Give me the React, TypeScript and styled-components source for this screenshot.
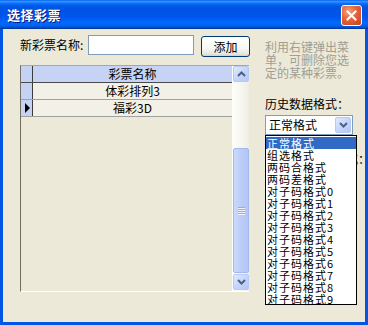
import React from "react";
import styled, { createGlobalStyle } from "styled-components";

const Global = createGlobalStyle`
  html, body { margin: 0; padding: 0; background: #ffffff; }
  body { font-family: "Noto Sans CJK SC", "Noto Sans", sans-serif; font-size: 12px; color: #000; }
  * { box-sizing: border-box; }
`;

const Window = styled.div`
  width: 368px;
  height: 325px;
  display: flex;
  flex-direction: column;
  background: #0055e5;
  overflow: hidden;
`;

const TitleBar = styled.div`
  height: 29px;
  flex: none;
  display: flex;
  align-items: center;
  justify-content: space-between;
  padding: 0 6px 0 7px;
  background: linear-gradient(
    180deg,
    #0058ee 0%,
    #3593ff 4%,
    #288eff 7%,
    #127dff 10%,
    #036ffc 13%,
    #0262ee 17%,
    #0057e5 22%,
    #0054e3 28%,
    #0055eb 56%,
    #005bf5 66%,
    #026afe 78%,
    #0062ef 88%,
    #0052d6 94%,
    #0040ab 97%,
    #003092 100%
  );
`;

const Title = styled.span`
  color: #ffffff;
  font-weight: bold;
  font-size: 13px;
  line-height: 16px;
  letter-spacing: 0.5px;
  text-shadow: 1px 1px 0 #0a1883;
  margin-top: 1px;
`;

const CloseButton = styled.div`
  width: 21px;
  height: 21px;
  border: 1px solid #ffffff;
  border-radius: 3px;
  background: radial-gradient(circle at 35% 30%, #f0a184 0%, #e2643c 45%, #c7401b 100%);
  display: flex;
  align-items: center;
  justify-content: center;
  margin-top: 2px;
`;

const Body = styled.div`
  flex: 1;
  margin: 0 3px 3px 3px;
  background: #ece9d8;
  display: flex;
  padding: 6px 0 0 17px;
`;

const LeftCol = styled.div`
  width: 230px;
  display: flex;
  flex-direction: column;
`;

const TopRow = styled.div`
  display: flex;
  align-items: flex-start;
  height: 22px;
`;

const FieldLabel = styled.span`
  width: 68px;
  line-height: 20px;
  white-space: nowrap;
`;

const TextInput = styled.div`
  width: 106px;
  height: 20px;
  border: 1px solid #7f9db9;
  background: #ffffff;
`;

const Button = styled.div`
  width: 49px;
  height: 21px;
  margin: 1px 0 0 7px;
  border: 1px solid #003c74;
  border-radius: 3px;
  background: linear-gradient(180deg, #ffffff 0%, #f7f7f4 60%, #e6e4da 90%, #d6d0c5 100%);
  display: flex;
  align-items: center;
  justify-content: center;
  line-height: 14px;
`;

const Grid = styled.div`
  margin-top: 8px;
  width: 229px;
  height: 227px;
  display: flex;
  border-top: 1px solid #aca899;
  border-left: 1px solid #716f64;
  border-bottom: 1px solid #ffffff;
  background: #ece9d8;
`;

const GridBody = styled.div`
  flex: 1;
  display: flex;
  flex-direction: column;
`;

const GridRow = styled.div<{ $header?: boolean }>`
  display: flex;
  height: 17px;
  border-bottom: 1px solid ${(p) => (p.$header ? "#4a4a4a" : "#a0a0a0")};
`;

const Indicator = styled.div`
  width: 12px;
  flex: none;
  background: #c4d2f3;
  border-right: 1px solid #3c3c3c;
  display: flex;
  align-items: center;
  justify-content: center;
`;

const Cell = styled.div<{ $header?: boolean }>`
  flex: 1;
  background: ${(p) => (p.$header ? "#c6d3f4" : "#f3f1e7")};
  text-align: center;
  line-height: 16px;
`;

const Scrollbar = styled.div`
  width: 17px;
  flex: none;
  display: flex;
  flex-direction: column;
  padding: 0 0 0 1px;
  background: linear-gradient(90deg, #fefefb 0%, #f6f5ef 60%, #eeede5 100%);
`;

const ScrollBtn = styled.div`
  height: 16px;
  flex: none;
  border: 1px solid #b6c9f5;
  border-radius: 2px;
  background: linear-gradient(135deg, #e2ebfd 0%, #c5d5fb 50%, #b5c8f6 100%);
  display: flex;
  align-items: center;
  justify-content: center;
`;

const Track = styled.div<{ $h: number }>`
  height: ${(p) => p.$h}px;
  flex: none;
`;

const Thumb = styled.div`
  height: 125px;
  flex: none;
  border: 1px solid #a3b9ee;
  border-radius: 2px;
  background: linear-gradient(90deg, #cad9fc 0%, #bccdf9 50%, #b2c5f6 100%);
  display: flex;
  flex-direction: column;
  align-items: center;
  justify-content: center;
  gap: 1px;
`;

const Grip = styled.div`
  width: 7px;
  height: 1px;
  background: #8eaef4;
  box-shadow: 0 1px 0 #eef3fe;
`;

const RightCol = styled.div`
  margin-left: 15px;
  width: 88px;
  display: flex;
  flex-direction: column;
  padding-top: 5px;
`;

const Hint = styled.div`
  color: #a09e94;
  line-height: 13px;
`;

const SectionLabel = styled.div`
  margin-top: 18px;
  line-height: 13px;
  white-space: nowrap;
`;

const ComboWrap = styled.div`
  position: relative;
  margin-top: 5px;
  width: 88px;
`;

const Combo = styled.div`
  height: 20px;
  border: 1px solid #7f9db9;
  background: #ffffff;
  display: flex;
  align-items: center;
  padding: 1px 1px 1px 3px;
`;

const ComboText = styled.span`
  flex: 1;
  line-height: 14px;
`;

const ComboBtn = styled(ScrollBtn)`
  width: 16px;
  height: 16px;
`;

const DropList = styled.div`
  position: absolute;
  top: 20px;
  left: 0;
  width: 92px;
  height: 170px;
  border: 1px solid #000000;
  background: #ffffff;
  padding: 1px 0 0 0;
  z-index: 2;
`;

const DropItem = styled.div<{ $selected?: boolean }>`
  height: 12px;
  line-height: 12px;
  font-size: 11px;
  letter-spacing: 1px;
  padding-left: 1px;
  white-space: nowrap;
  background: ${(p) => (p.$selected ? "#316ac5" : "transparent")};
  color: ${(p) => (p.$selected ? "#ffffff" : "#000000")};
`;

const HiddenLabel = styled.div`
  margin-top: 17px;
  width: 105px;
  text-align: right;
  line-height: 13px;
  white-space: nowrap;
`;

const Chevron = ({ up }: { up?: boolean }) => (
  <svg width="9" height="6" viewBox="0 0 9 6">
    <path
      d={up ? "M1 5 L4.5 1.5 L8 5" : "M1 1 L4.5 4.5 L8 1"}
      fill="none"
      stroke="#4d6185"
      strokeWidth="2"
    />
  </svg>
);

const items = [
  "正常格式",
  "组选格式",
  "两码合格式",
  "两码差格式",
  "对子码格式0",
  "对子码格式1",
  "对子码格式2",
  "对子码格式3",
  "对子码格式4",
  "对子码格式5",
  "对子码格式6",
  "对子码格式7",
  "对子码格式8",
  "对子码格式9",
];

export default function App() {
  return (
    <>
      <Global />
      <Window>
        <TitleBar>
          <Title>选择彩票</Title>
          <CloseButton>
            <svg width="11" height="11" viewBox="0 0 11 11">
              <path d="M1.5 1.5 L9.5 9.5 M9.5 1.5 L1.5 9.5" stroke="#ffffff" strokeWidth="2" strokeLinecap="square" />
            </svg>
          </CloseButton>
        </TitleBar>
        <Body>
          <LeftCol>
            <TopRow>
              <FieldLabel>新彩票名称:</FieldLabel>
              <TextInput />
              <Button>添加</Button>
            </TopRow>
            <Grid>
              <GridBody>
                <GridRow $header>
                  <Indicator />
                  <Cell $header>彩票名称</Cell>
                </GridRow>
                <GridRow>
                  <Indicator />
                  <Cell>体彩排列3</Cell>
                </GridRow>
                <GridRow>
                  <Indicator>
                    <svg width="6" height="10" viewBox="0 0 6 10">
                      <path d="M1 0 L6 5 L1 10 Z" fill="#000" />
                    </svg>
                  </Indicator>
                  <Cell>福彩3D</Cell>
                </GridRow>
              </GridBody>
              <Scrollbar>
                <ScrollBtn>
                  <Chevron up />
                </ScrollBtn>
                <Track $h={66} />
                <Thumb>
                  <Grip />
                  <Grip />
                  <Grip />
                  <Grip />
                </Thumb>
                <Track $h={1} />
                <ScrollBtn>
                  <Chevron />
                </ScrollBtn>
              </Scrollbar>
            </Grid>
          </LeftCol>
          <RightCol>
            <Hint>利用右键弹出菜单，可删除您选定的某种彩票。</Hint>
            <SectionLabel>历史数据格式：</SectionLabel>
            <ComboWrap>
              <Combo>
                <ComboText>正常格式</ComboText>
                <ComboBtn>
                  <Chevron />
                </ComboBtn>
              </Combo>
              <DropList>
                {items.map((t, i) => (
                  <DropItem key={t} $selected={i === 0}>
                    {t}
                  </DropItem>
                ))}
              </DropList>
            </ComboWrap>
            <HiddenLabel>号码格式：</HiddenLabel>
          </RightCol>
        </Body>
      </Window>
    </>
  );
}
